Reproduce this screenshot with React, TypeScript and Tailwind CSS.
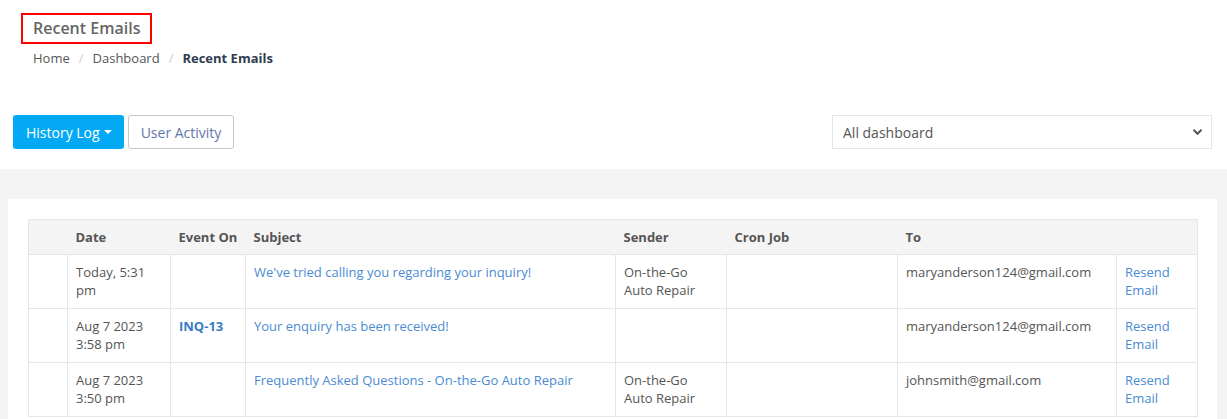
import React from "react";

const rows = [
  {
    date: ["Today, 5:31", "pm"],
    event: "",
    subject: "We've tried calling you regarding your inquiry!",
    sender: ["On-the-Go", "Auto Repair"],
    to: "maryanderson124@gmail.com",
  },
  {
    date: ["Aug 7 2023", "3:58 pm"],
    event: "INQ-13",
    subject: "Your enquiry has been received!",
    sender: [],
    to: "maryanderson124@gmail.com",
  },
  {
    date: ["Aug 7 2023", "3:50 pm"],
    event: "",
    subject: "Frequently Asked Questions - On-the-Go Auto Repair",
    sender: ["On-the-Go", "Auto Repair"],
    to: "johnsmith@gmail.com",
  },
];

const td = "border border-[#e6e6e6] px-2 pt-[8px] pb-[9px] align-top";

export default function App() {
  return (
    <div className="min-h-[419px] bg-white text-[13px] text-[#555] [font-family:'Open_Sans',sans-serif]">
      <div className="px-[21px] pt-[13px]">
        <h1 className="inline-block border-2 border-[#ff0000] px-[10px] py-[2px] text-[16px] leading-[23px] font-semibold text-[#666]">
          Recent Emails
        </h1>
        <div className="mt-[5px] flex items-center gap-[9px] pl-[12px] leading-[18px]">
          <span>Home</span>
          <span className="text-[#ccc]">/</span>
          <span>Dashboard</span>
          <span className="text-[#ccc]">/</span>
          <span className="font-bold text-[#2f3d4f]">Recent Emails</span>
        </div>
      </div>

      <div className="mt-[48px] flex items-center justify-between pl-[13px] pr-[15px]">
        <div className="flex gap-[4px]">
          <button className="flex h-[34px] items-center gap-[4px] rounded-[3px] bg-[#03a9f4] pl-[13px] pr-[12px] text-[14px] text-white">
            History Log
            <span className="h-0 w-0 border-x-[4px] border-t-[4px] border-x-transparent border-t-white" />
          </button>
          <button className="h-[34px] rounded-[3px] border border-[#c8c8c8] bg-white px-[12px] text-[14px] text-[#6378a8]">
            User Activity
          </button>
        </div>
        <div className="flex h-[34px] w-[380px] items-center justify-between border border-[#e6e6e6] pl-[10px] pr-[8px] text-[14px] text-[#555]">
          <span>All dashboard</span>
          <svg width="11" height="8" viewBox="0 0 11 8">
            <path d="M1.5 1.8 L5.5 5.8 L9.5 1.8" fill="none" stroke="#555" strokeWidth="2" />
          </svg>
        </div>
      </div>

      <div className="mt-[20px] bg-[#f3f3f3] pl-[8px] pr-[10px] pt-[30px]">
        <div className="bg-white px-[20px] pt-[20px] pb-[40px]">
          <table className="w-[1169px] table-fixed border-collapse leading-[18px]">
            <colgroup>
              <col className="w-[39px]" />
              <col className="w-[103px]" />
              <col className="w-[75px]" />
              <col className="w-[370px]" />
              <col className="w-[111px]" />
              <col className="w-[171px]" />
              <col className="w-[219px]" />
              <col className="w-[81px]" />
            </colgroup>
            <thead>
              <tr className="h-[35px] border border-[#e6e6e6] bg-[#f4f4f4] text-left font-bold text-[#555]">
                <th className="px-2"></th>
                <th className="px-2">Date</th>
                <th className="px-2 whitespace-nowrap">Event On</th>
                <th className="px-2">Subject</th>
                <th className="px-2">Sender</th>
                <th className="px-2">Cron Job</th>
                <th className="px-2">To</th>
                <th className="px-2"></th>
              </tr>
            </thead>
            <tbody>
              {rows.map((r, i) => (
                <tr key={i}>
                  <td className={td}></td>
                  <td className={td}>
                    {r.date[0]}
                    <br />
                    {r.date[1]}
                  </td>
                  <td className={`${td} font-bold text-[#3a7cc4]`}>{r.event}</td>
                  <td className={`${td} text-[#4a8bd2]`}>{r.subject}</td>
                  <td className={td}>
                    {r.sender.length > 0 && (
                      <>
                        {r.sender[0]}
                        <br />
                        {r.sender[1]}
                      </>
                    )}
                  </td>
                  <td className={td}></td>
                  <td className={td}>{r.to}</td>
                  <td className={`${td} text-[#4a8bd2]`}>
                    Resend
                    <br />
                    Email
                  </td>
                </tr>
              ))}
            </tbody>
          </table>
        </div>
      </div>
    </div>
  );
}
